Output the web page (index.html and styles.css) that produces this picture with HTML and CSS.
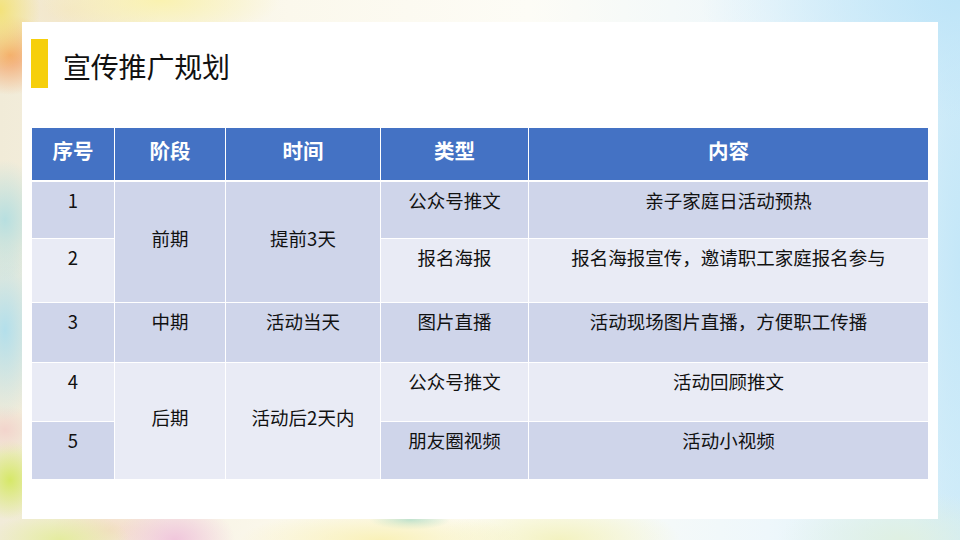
FILE: index.html
```html
<!DOCTYPE html>
<html lang="zh-CN">
<head>
<meta charset="utf-8">
<title>宣传推广规划</title>
<link rel="stylesheet" href="styles.css">
</head>
<body>
<div class="stage">
  <div class="panel">
    <div class="title-row">
      <span class="title-bar"></span>
      <h1 class="title">宣传推广规划</h1>
    </div>
    <table class="plan">
      <colgroup>
        <col class="c1"><col class="c2"><col class="c3"><col class="c4"><col class="c5">
      </colgroup>
      <thead>
        <tr class="head">
          <th>序号</th><th>阶段</th><th>时间</th><th>类型</th><th class="last">内容</th>
        </tr>
      </thead>
      <tbody>
        <tr class="r1 dark">
          <td>1</td>
          <td rowspan="2" class="merge">前期</td>
          <td rowspan="2" class="merge">提前3天</td>
          <td>公众号推文</td>
          <td class="last">亲子家庭日活动预热</td>
        </tr>
        <tr class="r2 light">
          <td>2</td>
          <td>报名海报</td>
          <td class="last">报名海报宣传，邀请职工家庭报名参与</td>
        </tr>
        <tr class="r3 dark">
          <td>3</td>
          <td>中期</td>
          <td>活动当天</td>
          <td>图片直播</td>
          <td class="last">活动现场图片直播，方便职工传播</td>
        </tr>
        <tr class="r4 light">
          <td>4</td>
          <td rowspan="2" class="merge bottom">后期</td>
          <td rowspan="2" class="merge bottom">活动后2天内</td>
          <td>公众号推文</td>
          <td class="last">活动回顾推文</td>
        </tr>
        <tr class="r5 dark">
          <td class="bottom">5</td>
          <td class="bottom">朋友圈视频</td>
          <td class="last bottom">活动小视频</td>
        </tr>
      </tbody>
    </table>
  </div>
</div>
</body>
</html>
```
FILE: styles.css
```css
html, body {
  margin: 0;
  padding: 0;
}
body {
  width: 960px;
  height: 540px;
  overflow: hidden;
  font-family: "Noto Sans CJK SC", "Noto Sans", sans-serif;
}
.stage {
  width: 960px;
  height: 540px;
  box-sizing: border-box;
  padding: 22px 22px 21px 22px;
  background:
    radial-gradient(ellipse 40px 60px at 0px 10px, #f3e27a 0%, rgba(243,226,122,0) 100%),
    radial-gradient(ellipse 45px 40px at 10px 55px, #f4a468 0%, rgba(244,164,104,0) 100%),
    radial-gradient(ellipse 120px 40px at 160px 0px, #faf2b0 0%, rgba(250,242,176,0) 100%),
    radial-gradient(ellipse 90px 50px at 70px 10px, #f3e6c8 0%, rgba(243,230,200,0) 100%),
    radial-gradient(ellipse 40px 60px at 5px 220px, #b7dfe0 0%, rgba(183,223,224,0) 100%),
    radial-gradient(ellipse 40px 90px at 5px 330px, #b3dfeb 0%, rgba(179,223,235,0) 100%),
    radial-gradient(ellipse 30px 25px at 5px 430px, #f2d4cc 0%, rgba(242,212,204,0) 100%),
    radial-gradient(ellipse 35px 40px at 10px 480px, #d6e868 0%, rgba(214,232,104,0) 100%),
    radial-gradient(ellipse 70px 30px at 60px 540px, #e4ec9e 0%, rgba(228,236,158,0) 100%),
    radial-gradient(ellipse 60px 40px at 175px 540px, #f0c6dc 0%, rgba(240,198,220,0) 100%),
    radial-gradient(ellipse 60px 30px at 110px 530px, #f4dcc8 0%, rgba(244,220,200,0) 100%),
    radial-gradient(ellipse 140px 30px at 380px 540px, #f9f1b8 0%, rgba(249,241,184,0) 100%),
    radial-gradient(ellipse 40px 10px at 410px 520px, #aadcd6 0%, rgba(170,220,214,0) 100%),
    radial-gradient(ellipse 120px 40px at 560px 540px, #f3f2c0 0%, rgba(243,242,192,0) 100%),
    radial-gradient(ellipse 120px 50px at 900px 540px, #dff0e2 0%, rgba(223,240,226,0) 100%),
    radial-gradient(ellipse 260px 120px at 960px 0px, #bfe5f8 0%, rgba(191,229,248,0) 100%),
    radial-gradient(ellipse 60px 400px at 960px 260px, #c4e7f8 0%, rgba(196,231,248,0) 100%),
    linear-gradient(90deg, #f1ebd8 0%, #fbf8ec 30%, #fdfcf6 55%, #eef7fb 80%, #d6eef9 100%);
}
.panel {
  width: 916px;
  height: 497px;
  background: #ffffff;
  box-sizing: border-box;
  padding: 17px 10px 0 9px;
}
.title-row {
  display: flex;
  align-items: center;
  height: 49px;
}
.title-bar {
  width: 17px;
  height: 49px;
  background: #f6cf0b;
  flex: none;
}
.title {
  margin: 4px 0 0 15px;
  font-size: 28px;
  font-weight: 400;
  line-height: 34px;
  color: #111111;
  letter-spacing: -0.2px;
}
.plan {
  margin-top: 40px;
  margin-left: 1px;
  width: 896px;
  table-layout: fixed;
  border-collapse: separate;
  border-spacing: 0;
  font-size: 18.5px;
  color: #111111;
}
.c1 { width: 83px; }
.c2 { width: 111px; }
.c3 { width: 155px; }
.c4 { width: 148px; }
.c5 { width: 399px; }
.plan th, .plan td {
  padding: 0;
  text-align: center;
  border-right: 1px solid #ffffff;
  border-bottom: 1px solid #ffffff;
  white-space: nowrap;
  overflow: hidden;
}
.plan .last { border-right: none; }
.plan .bottom { border-bottom: none; }
.head { height: 54px; }
.head th {
  background: #4472c4;
  color: #ffffff;
  font-size: 20.5px;
  font-weight: 700;
  vertical-align: middle;
  padding-bottom: 9px;
  border-bottom: 2px solid #ffffff;
  line-height: 26px;
}
.plan td {
  vertical-align: top;
  padding-top: 6px;
  line-height: 24px;
}
.plan td.merge {
  vertical-align: middle;
  padding-top: 0;
  padding-bottom: 9px;
}
.r1 { height: 57px; }
.r2 { height: 64px; }
.r3 { height: 60px; }
.r4 { height: 59px; }
.r5 { height: 57px; }
.dark td { background: #cfd5ea; }
.light td { background: #e9ebf5; }
```
